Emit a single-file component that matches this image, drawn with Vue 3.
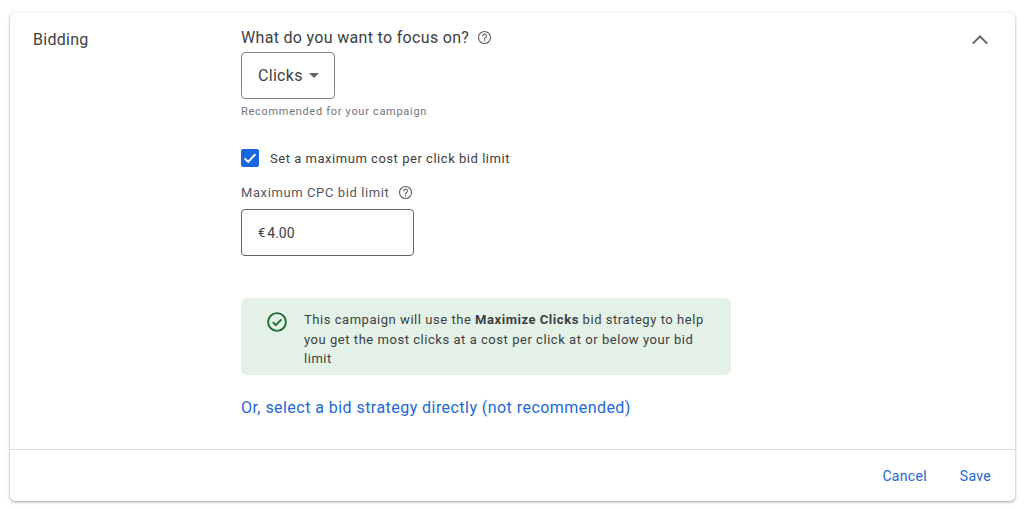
<template>
  <div class="page">
    <section class="card">
      <div class="card-body">
        <h2 class="section-title">Bidding</h2>

        <div class="content">
          <div class="question">
            <span>What do you want to focus on?</span>
            <svg class="help" width="15" height="15" viewBox="0 0 24 24" fill="none" stroke="#5f6368" stroke-width="1.8">
              <circle cx="12" cy="12" r="9.6"></circle>
              <path d="M9 9.6a3 3 0 1 1 4.7 2.5c-1 .7-1.7 1.3-1.7 2.6" stroke-linecap="round"></path>
              <circle cx="12" cy="17.4" r="1.1" fill="#5f6368" stroke="none"></circle>
            </svg>
          </div>

          <button class="select-btn" type="button">
            <span>{{ focus }}</span>
            <i class="caret"></i>
          </button>
          <p class="hint">Recommended for your campaign</p>

          <label class="check-row">
            <span class="checkbox">
              <svg width="18" height="18" viewBox="0 0 18 18" fill="none" stroke="#fff" stroke-width="2">
                <path d="M3.6 9.4l3.6 3.5 7.2-7.6"></path>
              </svg>
            </span>
            <span>Set a maximum cost per click bid limit</span>
          </label>

          <div class="field-label">
            <span>Maximum CPC bid limit</span>
            <svg class="help" width="15" height="15" viewBox="0 0 24 24" fill="none" stroke="#5f6368" stroke-width="1.8">
              <circle cx="12" cy="12" r="9.6"></circle>
              <path d="M9 9.6a3 3 0 1 1 4.7 2.5c-1 .7-1.7 1.3-1.7 2.6" stroke-linecap="round"></path>
              <circle cx="12" cy="17.4" r="1.1" fill="#5f6368" stroke="none"></circle>
            </svg>
          </div>
          <div class="money-input">
            <span class="currency">€</span>
            <span>{{ bidLimit }}</span>
          </div>

          <div class="notice">
            <svg class="notice-icon" width="22" height="22" viewBox="0 0 22 22" fill="none" stroke="#1e6b34" stroke-width="1.9">
              <circle cx="11" cy="11" r="8.9"></circle>
              <path d="M6.8 11.2l3 3 5.6-5.8"></path>
            </svg>
            <p>This campaign will use the <b>Maximize Clicks</b> bid strategy to help you get the most clicks at a cost per click at or below your bid limit</p>
          </div>

          <a class="strategy-link" href="#">Or, select a bid strategy directly (not recommended)</a>
        </div>

        <button class="collapse" type="button" aria-label="Collapse">
          <svg width="18" height="11" viewBox="0 0 18 11" fill="none" stroke="#5f6368" stroke-width="2">
            <path d="M1.8 9.6l7.2-7.2 7.2 7.2"></path>
          </svg>
        </button>
      </div>

      <footer class="card-footer">
        <a href="#">Cancel</a>
        <a href="#">Save</a>
      </footer>
    </section>
  </div>
</template>

<script setup>
import { ref } from 'vue';

const focus = ref('Clicks');
const bidLimit = ref('4.00');
</script>

<style>
html,
body {
  background: #fff;
}
</style>

<style scoped>
.page {
  box-sizing: border-box;
  width: 1024px;
  height: 509px;
  padding: 13px 9px 8px 10px;
  font-family: Roboto, "Liberation Sans", sans-serif;
  color: #3c4043;
  overflow: hidden;
}

.card {
  display: flex;
  flex-direction: column;
  height: 100%;
  background: #fff;
  border-radius: 5px;
  box-shadow: 0 1px 2px rgba(60, 64, 67, 0.3), 0 1px 3px 1px rgba(60, 64, 67, 0.15);
}

.card-body {
  flex: 1;
  display: flex;
  padding: 14px 26px 0 23px;
}

.section-title {
  width: 208px;
  margin: 3px 0 0;
  font-size: 16px;
  line-height: 20px;
  font-weight: 400;
  letter-spacing: 0.28px;
  color: #3c4043;
}

.content {
  flex: 1;
}

.question {
  display: flex;
  align-items: center;
  gap: 8px;
  height: 20px;
  font-size: 16px;
  letter-spacing: 0.32px;
  color: #3c4043;
}

.select-btn {
  display: flex;
  align-items: center;
  gap: 6px;
  box-sizing: border-box;
  width: 94px;
  height: 47px;
  margin-top: 5px;
  padding: 0 0 0 16px;
  background: #fff;
  border: 1px solid #80868b;
  border-radius: 4px;
  font: inherit;
  font-size: 16px;
  letter-spacing: 0.3px;
  color: #3c4043;
}

.caret {
  width: 0;
  height: 0;
  border-left: 5px solid transparent;
  border-right: 5px solid transparent;
  border-top: 5px solid #5f6368;
}

.hint {
  margin: 6px 0 0;
  font-size: 11px;
  line-height: 14px;
  letter-spacing: 0.7px;
  color: #70757a;
}

.check-row {
  display: flex;
  align-items: flex-start;
  gap: 11px;
  margin-top: 30px;
  font-size: 13px;
  line-height: 20px;
  letter-spacing: 0.53px;
  color: #3c4043;
}

.checkbox {
  display: block;
  width: 18px;
  height: 18px;
  background: #1a66e0;
  border-radius: 2px;
}

.checkbox svg {
  display: block;
}

.field-label {
  display: flex;
  align-items: center;
  gap: 9px;
  height: 18px;
  margin-top: 14px;
  font-size: 13px;
  letter-spacing: 0.6px;
  color: #54585c;
}

.help {
  flex: none;
}

.money-input {
  display: flex;
  align-items: center;
  gap: 2px;
  box-sizing: border-box;
  width: 173px;
  height: 47px;
  margin-top: 8px;
  padding-left: 16px;
  border: 1.5px solid #5f6368;
  border-radius: 4px;
  font-size: 14px;
  color: #3c4043;
}

.currency {
  font-size: 13px;
}

.notice {
  display: flex;
  box-sizing: border-box;
  width: 490px;
  height: 77px;
  margin-top: 42px;
  padding: 12px 20px 0 25px;
  background: #e3f1e6;
  border-radius: 6px;
}

.notice-icon {
  flex: none;
  margin: 1px 16px 0 0;
}

.notice p {
  margin: 0;
  font-size: 13px;
  line-height: 19.5px;
  letter-spacing: 0.54px;
  color: #3c4043;
}

.notice b {
  font-weight: 700;
}

.strategy-link {
  display: block;
  margin-top: 23px;
  font-size: 16px;
  line-height: 20px;
  letter-spacing: 0.45px;
  color: #2168d8;
  text-decoration: none;
}

.collapse {
  flex: none;
  width: 18px;
  height: 11px;
  margin-top: 7px;
  padding: 0;
  background: none;
  border: none;
}

.collapse svg {
  display: block;
}

.card-footer {
  display: flex;
  justify-content: flex-end;
  align-items: center;
  gap: 33px;
  height: 51px;
  padding: 0 24px 0 0;
  border-top: 1px solid #dadce0;
  font-size: 14px;
  letter-spacing: 0.3px;
}

.card-footer a {
  color: #2168d8;
  text-decoration: none;
}
</style>
